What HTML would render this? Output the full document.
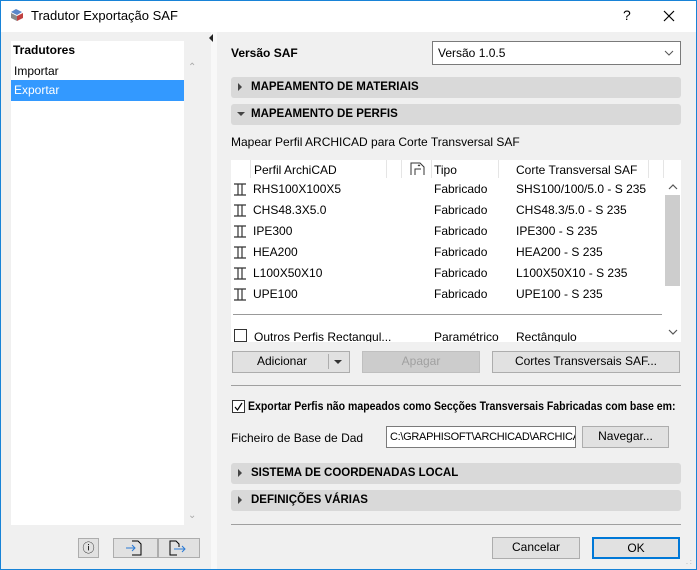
<!DOCTYPE html>
<html><head><meta charset="utf-8"><style>
*{box-sizing:border-box;margin:0;padding:0}
body{width:697px;height:570px;overflow:hidden;font-family:"Liberation Sans",sans-serif;font-size:12px;color:#000;background:#f0f0f0;position:relative}
.a{position:absolute}
.win{left:0;top:0;width:697px;height:570px;border:1px solid #1883d7}
.hdr{background:#d9d9d9;border-radius:3px;font-weight:bold;font-size:11.5px;line-height:20px;padding-left:20px}
.tri{position:absolute;left:7px;top:6px;width:0;height:0;border-top:4px solid transparent;border-bottom:4px solid transparent;border-left:4px solid #444}
.trd{position:absolute;left:6px;top:8px;width:0;height:0;border-left:4px solid transparent;border-right:4px solid transparent;border-top:4px solid #444}
.btn{background:#e1e1e1;border:1px solid #adadad;text-align:center;line-height:19px}
.row{left:233px;height:21px;line-height:21px}
</style></head><body>
<div class="a win"></div>
<div class="a" style="left:1px;top:1px;width:695px;height:31px;background:#fff"></div>
<svg class="a" style="left:9px;top:7px" width="16" height="16" viewBox="0 0 16 16"><path d="M2 5l5-3 6 3-5 3z" fill="#5a86c9"/><path d="M2 6l6 3v5l-6-3z" fill="#8a8a8a"/><path d="M8 9l6-3v5l-6 3z" fill="#c04040"/></svg>
<div class="a" style="left:31px;top:8px;font-size:13px">Tradutor Exportação SAF</div>
<div class="a" style="left:623px;top:7px;font-size:14px">?</div>
<svg class="a" style="left:663px;top:10px" width="12" height="12"><path d="M1 1l10 10M11 1L1 11" stroke="#000" stroke-width="1.2"/></svg>

<div class="a" style="left:11px;top:41px;width:173px;height:484px;background:#fff"></div>
<div class="a" style="left:13px;top:43px;font-weight:bold">Tradutores</div>
<div class="a" style="left:14px;top:64px">Importar</div>
<div class="a" style="left:11px;top:80px;width:173px;height:21px;background:#3399ff;color:#fff;padding-left:3px;line-height:21px">Exportar</div>
<div class="a" style="left:188px;top:62px;color:#aaa;font-size:10px">&#8963;</div>
<div class="a" style="left:188px;top:510px;color:#aaa;font-size:10px">&#8964;</div>
<div class="a btn" style="left:78px;top:538px;width:21px;height:20px;line-height:18px">ⓘ</div>
<div class="a btn" style="left:113px;top:538px;width:45px;height:20px"></div>
<div class="a btn" style="left:158px;top:538px;width:42px;height:20px"></div>
<svg class="a" style="left:124px;top:540px" width="24" height="16"><path d="M8 1h6l3 3v11H8" fill="none" stroke="#000"/><path d="M2 8h9M8 5l3 3-3 3" fill="none" stroke="#2a7ad5"/></svg>
<svg class="a" style="left:167px;top:540px" width="24" height="16"><path d="M10 15H3V1h6l3 3v3" fill="none" stroke="#000"/><path d="M7 9h11M15 6l3 3-3 3" fill="none" stroke="#2a7ad5"/></svg>

<div class="a" style="left:211px;top:32px;width:6px;height:537px;background:#f8f8f8"></div>
<div class="a" style="left:209px;top:34px;width:0;height:0;border-top:4px solid transparent;border-bottom:4px solid transparent;border-right:4px solid #222"></div>

<div class="a" style="left:231px;top:46px;font-weight:bold">Versão SAF</div>
<div class="a" style="left:432px;top:41px;width:249px;height:24px;background:#fff;border:1px solid #7a7a7a;padding-left:5px;line-height:22px">Versão 1.0.5</div>
<svg class="a" style="left:664px;top:49px" width="10" height="8"><path d="M1 2l4 4 4-4" fill="none" stroke="#555"/></svg>

<div class="a hdr" style="left:231px;top:77px;width:450px;height:21px"><span class="tri"></span>MAPEAMENTO DE MATERIAIS</div>
<div class="a hdr" style="left:231px;top:104px;width:450px;height:21px"><span class="trd"></span>MAPEAMENTO DE PERFIS</div>
<div class="a" style="left:231px;top:135px">Mapear Perfil ARCHICAD para Corte Transversal SAF</div>

<div class="a" style="left:231px;top:160px;width:450px;height:182px;background:#fff"></div>
<div class="a" style="left:250px;top:160px;width:1px;height:18px;background:#e5e5e5"></div>
<div class="a" style="left:386px;top:160px;width:1px;height:18px;background:#e5e5e5"></div>
<div class="a" style="left:401px;top:160px;width:1px;height:18px;background:#e5e5e5"></div>
<div class="a" style="left:431px;top:160px;width:1px;height:18px;background:#e5e5e5"></div>
<div class="a" style="left:498px;top:160px;width:1px;height:18px;background:#e5e5e5"></div>
<div class="a" style="left:648px;top:160px;width:1px;height:18px;background:#e5e5e5"></div>
<div class="a" style="left:663px;top:160px;width:1px;height:18px;background:#e5e5e5"></div>
<div class="a" style="left:254px;top:163px">Perfil ArchiCAD</div>
<svg class="a" style="left:410px;top:162px" width="16" height="14"><path d="M1 13V1h9l4 4v8M5 13V7h6M8 4l1-1 1 1" fill="none" stroke="#333"/></svg>
<div class="a" style="left:434px;top:163px">Tipo</div>
<div class="a" style="left:516px;top:163px">Corte Transversal SAF</div>

<div class="a" style="left:0;top:179px">
<div class="a row" style="top:0"><svg class="a" style="left:0;top:4px" width="14" height="13"><path d="M1 1h12M1 12h12M5 1v11M9 1v11" fill="none" stroke="#333" stroke-width="1.2"/></svg><span class="a" style="left:20px">RHS100X100X5</span><span class="a" style="left:201px">Fabricado</span><span class="a" style="left:283px;white-space:nowrap">SHS100/100/5.0 - S 235</span></div>
<div class="a row" style="top:21px"><svg class="a" style="left:0;top:4px" width="14" height="13"><path d="M1 1h12M1 12h12M5 1v11M9 1v11" fill="none" stroke="#333" stroke-width="1.2"/></svg><span class="a" style="left:20px">CHS48.3X5.0</span><span class="a" style="left:201px">Fabricado</span><span class="a" style="left:283px;white-space:nowrap">CHS48.3/5.0 - S 235</span></div>
<div class="a row" style="top:42px"><svg class="a" style="left:0;top:4px" width="14" height="13"><path d="M1 1h12M1 12h12M5 1v11M9 1v11" fill="none" stroke="#333" stroke-width="1.2"/></svg><span class="a" style="left:20px">IPE300</span><span class="a" style="left:201px">Fabricado</span><span class="a" style="left:283px;white-space:nowrap">IPE300 - S 235</span></div>
<div class="a row" style="top:63px"><svg class="a" style="left:0;top:4px" width="14" height="13"><path d="M1 1h12M1 12h12M5 1v11M9 1v11" fill="none" stroke="#333" stroke-width="1.2"/></svg><span class="a" style="left:20px">HEA200</span><span class="a" style="left:201px">Fabricado</span><span class="a" style="left:283px;white-space:nowrap">HEA200 - S 235</span></div>
<div class="a row" style="top:84px"><svg class="a" style="left:0;top:4px" width="14" height="13"><path d="M1 1h12M1 12h12M5 1v11M9 1v11" fill="none" stroke="#333" stroke-width="1.2"/></svg><span class="a" style="left:20px">L100X50X10</span><span class="a" style="left:201px">Fabricado</span><span class="a" style="left:283px;white-space:nowrap">L100X50X10 - S 235</span></div>
<div class="a row" style="top:105px"><svg class="a" style="left:0;top:4px" width="14" height="13"><path d="M1 1h12M1 12h12M5 1v11M9 1v11" fill="none" stroke="#333" stroke-width="1.2"/></svg><span class="a" style="left:20px">UPE100</span><span class="a" style="left:201px">Fabricado</span><span class="a" style="left:283px;white-space:nowrap">UPE100 - S 235</span></div>
</div>
<div class="a" style="left:233px;top:314px;width:429px;height:1px;background:#999"></div>
<div class="a" style="left:231px;top:328px;width:434px;height:14px;overflow:hidden">
<div class="a" style="left:3px;top:1px;width:13px;height:13px;border:1px solid #333;background:#fff"></div>
<span class="a" style="left:23px;top:2px;white-space:nowrap">Outros Perfis Rectangul...</span><span class="a" style="left:203px;top:2px">Paramétrico</span><span class="a" style="left:285px;top:2px">Rectângulo</span></div>
<div class="a" style="left:665px;top:195px;width:15px;height:91px;background:#cdcdcd"></div>
<svg class="a" style="left:668px;top:183px" width="10" height="8"><path d="M1 6l4-4 4 4" fill="none" stroke="#555" stroke-width="1.2"/></svg>
<svg class="a" style="left:668px;top:328px" width="10" height="8"><path d="M1 2l4 4 4-4" fill="none" stroke="#555" stroke-width="1.2"/></svg>

<div class="a btn" style="left:232px;top:351px;width:118px;height:22px;text-align:left;padding-left:24px">Adicionar</div>
<div class="a" style="left:328px;top:354px;width:1px;height:15px;background:#adadad"></div>
<div class="a" style="left:334px;top:360px;width:0;height:0;border-left:4px solid transparent;border-right:4px solid transparent;border-top:4px solid #333"></div>
<div class="a btn" style="left:362px;top:351px;width:118px;height:22px;background:#cccccc;border-color:#bfbfbf;color:#a0a0a0">Apagar</div>
<div class="a btn" style="left:492px;top:351px;width:188px;height:22px">Cortes Transversais SAF...</div>
<div class="a" style="left:231px;top:385px;width:450px;height:1px;background:#a0a0a0"></div>

<div class="a" style="left:232px;top:400px;width:13px;height:13px;border:1px solid #333;background:#fff"></div>
<svg class="a" style="left:233px;top:401px" width="11" height="11"><path d="M2 6l2.5 3L9 2" fill="none" stroke="#000" stroke-width="1.2"/></svg>
<div class="a" style="left:248px;top:401px;font-weight:bold;font-size:11.5px;white-space:nowrap;transform:scaleX(0.915);transform-origin:0 0">Exportar Perfis não mapeados como Secções Transversais Fabricadas com base em:</div>
<div class="a" style="left:231px;top:431px">Ficheiro de Base de Dad</div>
<div class="a" style="left:386px;top:426px;width:190px;height:22px;background:#fff;border:1px solid #7a7a7a;line-height:20px;padding-left:3px;overflow:hidden;white-space:nowrap;font-size:11px;letter-spacing:-0.3px">C:\GRAPHISOFT\ARCHICAD\ARCHICAD</div>
<div class="a btn" style="left:582px;top:426px;width:87px;height:22px">Navegar...</div>

<div class="a hdr" style="left:231px;top:463px;width:450px;height:21px"><span class="tri"></span>SISTEMA DE COORDENADAS LOCAL</div>
<div class="a hdr" style="left:231px;top:490px;width:450px;height:21px"><span class="tri"></span>DEFINIÇÕES VÁRIAS</div>
<div class="a" style="left:231px;top:524px;width:450px;height:1px;background:#a0a0a0"></div>
<div class="a btn" style="left:492px;top:537px;width:88px;height:22px">Cancelar</div>
<div class="a btn" style="left:592px;top:537px;width:88px;height:22px;border:2px solid #0078d7;line-height:18px">OK</div>
<div class="a" style="left:686px;top:558px;color:#999;font-size:7px;line-height:3px">&nbsp;&nbsp;.<br>.&nbsp;.</div>
</body></html>
